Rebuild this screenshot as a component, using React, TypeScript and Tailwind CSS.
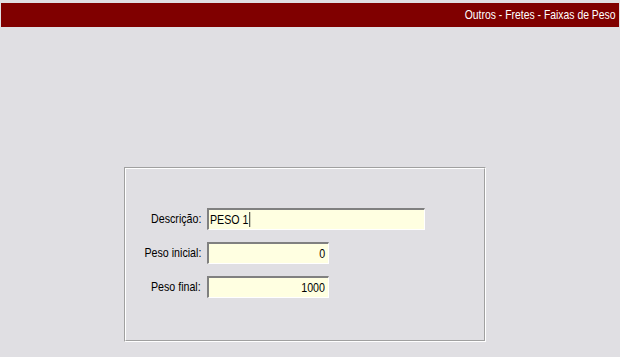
import React from "react";

const font = { fontFamily: '"Liberation Sans", Arial, sans-serif' };

function Field({ label, width, value, right, caret }: { label: string; width: string; value: string; right?: boolean; caret?: boolean }) {
  return (
    <div className="flex items-center h-[22px]">
      <div className="w-[76px] text-right text-[13px] text-black pr-[1px] whitespace-nowrap">
        <span className="inline-block scale-x-[0.82] origin-right">{label}</span>
      </div>
      <div
        className={`${width} h-[22px] ml-[5px] bg-[#ffffe1] border-t-2 border-l-2 border-t-[#808080] border-l-[#808080] border-b border-r border-b-white border-r-white flex items-center ${right ? "justify-end pr-[3px]" : "pl-[1px]"} text-[13px] text-black whitespace-nowrap`}
      >
        <span className={`inline-flex items-center scale-x-[0.82] ${right ? "origin-right" : "origin-left"}`}>
          {value}
          {caret && <span className="inline-block w-[1.25px] h-[15px] bg-black ml-[1px]" />}
        </span>
      </div>
    </div>
  );
}

export default function App() {
  return (
    <div className="w-[620px] h-[357px] bg-[#e0dfe3] overflow-hidden pt-[3px]" style={font}>
      <div className="mx-[1px] h-[24px] bg-[#800000] flex items-center justify-end pr-[3px] whitespace-nowrap">
        <span className="inline-block text-white text-[13px] scale-x-[0.8] origin-right">Outros - Fretes - Faixas de Peso</span>
      </div>
      <div className="ml-[124px] mt-[140px] w-[362px] h-[175px] border border-t-[#a0a0a0] border-l-[#a0a0a0] border-b-white border-r-white">
        <div className="w-full h-full border border-t-white border-l-white border-b-[#a0a0a0] border-r-[#a0a0a0] pt-[39px] flex flex-col gap-[12px]">
          <Field label="Descrição:" width="w-[218px]" value="PESO 1" caret />
          <Field label="Peso inicial:" width="w-[122px]" value="0" right />
          <Field label="Peso final:" width="w-[122px]" value="1000" right />
        </div>
      </div>
    </div>
  );
}
